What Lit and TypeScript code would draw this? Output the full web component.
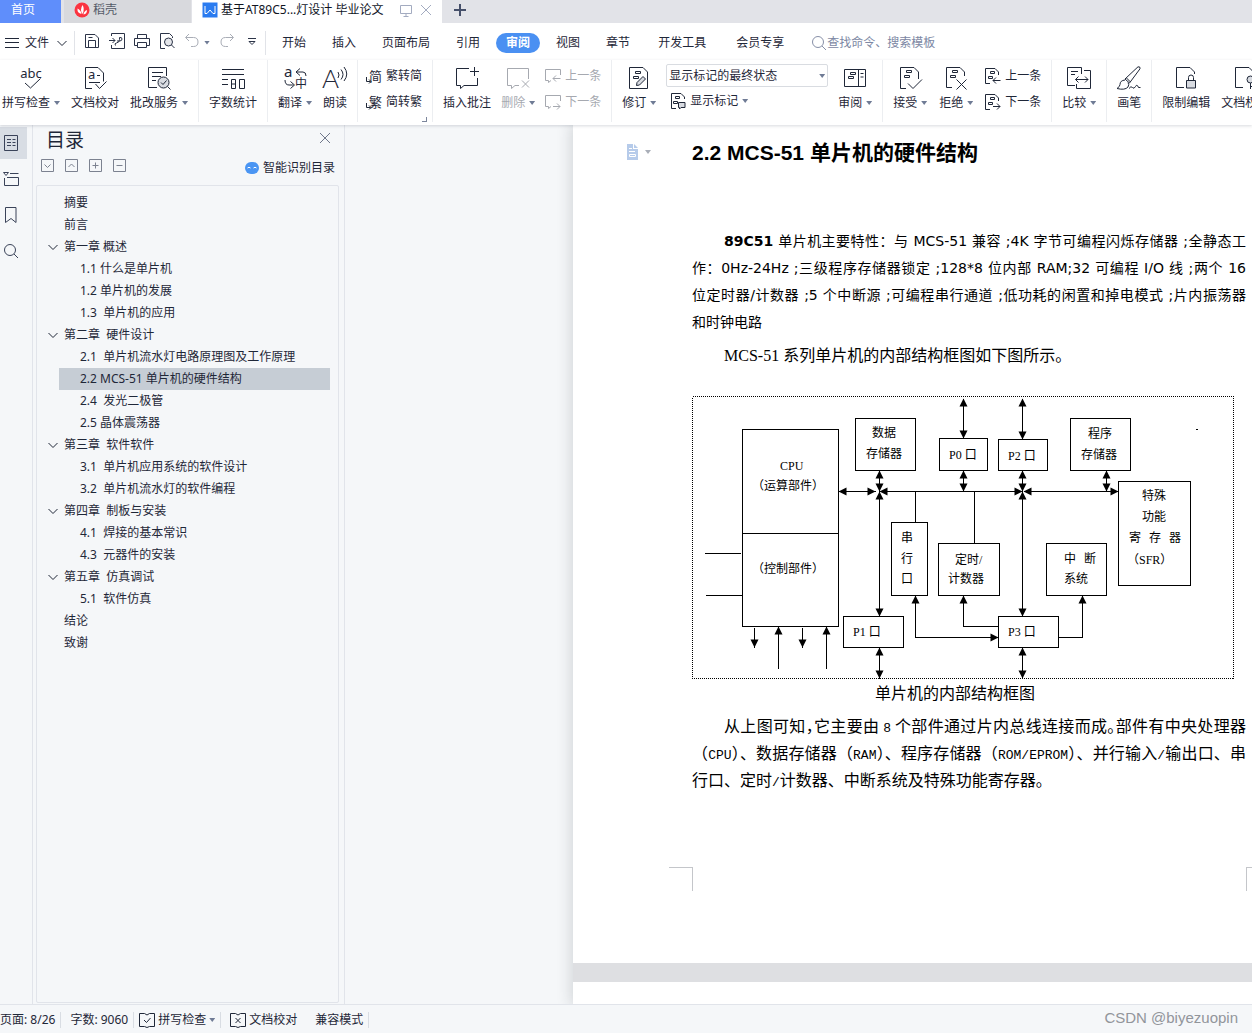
import { LitElement, html, svg, css, nothing } from "lit";
import { customElement, property, state } from "lit/decorators.js";
import { classMap } from "lit/directives/class-map.js";

const ICONS: Record<string, unknown> = {
  spell: svg`<text class="ic" x="12" y="12" text-anchor="middle" font-size="13">abc</text><path d="M6 17l5.500 5 10-9.500"/>`,
  proof: svg`<path d="M9 22.500H2.500V1.500H15l5.500 5.500V15.500M6 16.500h11"/><text class="ic" x="5" y="13" font-size="13">a</text><path d="M14 9.500h3M12.500 18l4 4.500 7-7"/>`,
  service: svg`<path d="M10 21.500H1.500V1.500H19.500V10M5 6.500h11M5 10.500h9M5 14.500h4"/><circle cx="16.500" cy="16.500" r="5.500" fill="#d8dbe1"/><path d="M14 16.500l2 2 3.500-4M20.500 20.500l3 3"/>`,
  count: svg`<path d="M1 3.500h22M1 8.500h22M1 13.500h6M1 18.500h6M10.500 13.500h4v9h-4zM18.500 13.500h5v9h-5zM10.500 18h4"/>`,
  translate: svg`<text class="ic" x="1" y="11" font-size="15">a</text><text class="ic" x="12" y="22" font-size="12">中</text><path d="M17 2.500l-4 3.500 4 3.500M13.500 6H20q3 0 3 4M2 14q0 5 4 5h4.500M7.500 15.500l4 3.500-4 3.500"/>`,
  read: svg`<text class="ic thin" x="-1" y="22" font-size="26">A</text><path d="M15 6q2 3 0 6M18 3.500q4 5 0 10M21 1q5.500 7 0 14"/>`,
  toSimple: svg`<text class="ic" x="3" y="13" font-size="13">简</text><path d="M.5 9v4.500h4M3 11.500l2 2-2 2"/>`,
  toTrad: svg`<text class="ic" x="3" y="13" font-size="13">繁</text><path d="M.5 9v4.500h4M3 11.500l2 2-2 2"/>`,
  addNote: svg`<path d="M14 2.500H1.500V19.500H5.500V22.500L9 19.500H22.500V12M19.500 1v9M15 5.500h9"/>`,
  delNote: svg`<path d="M22.500 13V2.500H1.500V19.500H5.500V22.500L9 19.500H13M16 14.500l7 7M23 14.500l-7 7"/>`,
  prevNote: svg`<path d="M15.500 7V1.500H.5V12.500H3.500V14.500L6 12.500M15.500 10.500H8M11 7.500l-3 3 3 3"/>`,
  nextNote: svg`<path d="M15.500 7V1.500H.5V12.500H3.500V14.500L6 12.500M8 12.500H15M12 9.500l3 3-3 3"/>`,
  revise: svg`<path d="M2.500 1.500H16l4.500 4.500V22.500H2.500zM8.500 5.500h5v2h-5zM6.500 10.500h5v2h-5z"/><path d="M9.500 19.500l.5-3 6-6 2.500 2.500-6 6z" fill="#d8dbe1"/>`,
  marks: svg`<path d="M6 15.500H1.500V.5H11L14.500 4V6M5.500 3.500h4v2h-4zM3.500 8.500h4v2h-4z"/><path d="M8.500 9.500h6.500v5h-4l-1.500 1.500v-1.500h-1z" fill="#d8dbe1"/>`,
  pane: svg`<path d="M1.500 3.500H22.500V20.500H1.500zM15.500 3.500V20.500M7.500 6.500h5v2h-5zM5.500 10.500h5v2h-5zM17.500 7.500h3M17.500 11h3"/>`,
  accept: svg`<path d="M8 22.500H2.500V1.500H16l4.500 4.500V13M8.500 4.500h5v2h-5zM6.500 9.500h5v2h-5zM10 17.500l5 5 9-9"/>`,
  reject: svg`<path d="M8 21.500H2.500V1.500H16l4.500 4.500V10M8.500 4.500h5v2h-5zM6.500 9.500h5v2h-5zM12.500 13.500l10 10M22.500 13.500l-10 10"/>`,
  prevRev: svg`<path d="M5 15.500H.5V.5H10L13.500 4V7M5.500 3.500h4v2h-4zM3.500 8.500h4v2h-4zM15.500 12.500H8M11 9.500l-3 3 3 3"/>`,
  nextRev: svg`<path d="M5 15.500H.5V.5H10L13.500 4V7M5.500 3.500h4v2h-4zM3.500 8.500h4v2h-4zM8 12.500H15M12 9.500l3 3-3 3"/>`,
  compare: svg`<path d="M8 19.500H0.500V1.500H14.500V8M4 5.500h7M4 8.500h4M17 4.500H23.500V22.500H9.500V18M8.500 13.500H21M11.500 10.500l-3 3 3 3M18 10.500l3 3-3 3"/>`,
  brush: svg`<path d="M8 13L21 .8q2.500-.5 2 2L12.500 17zM9.500 12l4 4M8 14q-5 .5-5 4.500 0 2-3 4 8 2 11-1.500 1.500-2.500 0-4.500M12 22.500q2-3 3.500-1t3-1 3 1h2"/>`,
  lock: svg`<path d="M10 21.500H2.500V1.500H16l4.500 4.500V8"/><path d="M12.500 14.500h9v7.500h-9z" fill="#d8dbe1"/><path d="M14.500 14v-2.500q0-2.500 2.500-2.500t2.500 2.500v2.500"/>`,
  rights: svg`<path d="M10 21.500H2.500V1.500H16l4.500 4.500V8"/><circle cx="17.500" cy="13.500" r="3.500" fill="#d8dbe1"/><path d="M17.500 17v6M17.500 20.500h3"/>`,
  burger: svg`<path d="M1 3.500h14M1 7.500h14M1 12.500h14"/>`,
  save: svg`<path d="M1.500 1.500H11L14.500 5V14.500H1.500zM4.500 14V7.500H11.500V14M4.500 4.500h4"/>`,
  pdf: svg`<path d="M2.500 3V.5H15.500V15.500H2.500V12M0 7.500h6M3.500 5l2.500 2.500L3.500 10M6.500 12.500q-1.500-2 1-2.500 3-.5 3-3.500V4.500q2.500-.5 2.500 1.500t-2.500 2H8"/>`,
  print: svg`<path d="M3.500 5V1.500H12.500V5M3.500 12.500H.5V5.500H15.500V12.500H12.500M3.500 9.500H12.500V14.500H3.500z"/>`,
  preview: svg`<path d="M6 15.500H1.500V.5H10.500L13.500 3.500V5"/><circle cx="9.500" cy="9" r="4" fill="#e4e6ea"/><path d="M12.500 12l3 3"/>`,
  undo: svg`<path d="M5 1L1.500 4.500 5 8M2 4.500H9.500q4.500 0 4.500 4.500t-4.500 4.500H7"/>`,
  redo: svg`<path d="M11 1l3.500 3.500L11 8M14 4.500H6.500Q2 4.500 2 9t4.500 4.500H9"/>`,
  more: svg`<path d="M4 5.500h8M5 8.500h6L8 11.500z"/>`,
  search: svg`<circle cx="7" cy="7" r="5.500"/><path d="M11 11l4 4"/>`,
  chevron: svg`<path d="M3.500 6L8 10.500 12.500 6"/>`,
  close: svg`<path d="M3 3l10 10M13 3L3 13"/>`,
  plus: svg`<path d="M8 2v12M2 8h12" stroke-width="2"/>`,
  screen: svg`<path d="M2.500 3.500h11v8h-11zM8 12v2.500M5.500 14.500h5"/>`,
  shell: svg`<circle cx="8" cy="8" r="7.500" fill="#fb3440" stroke="none"/><path d="M8.500 12q-3-4 0-9 2.500 4 0 9zM7.500 12Q3 11 3.500 6.500 7 8 7.500 12zM9.500 12.500q0-3 3.500-4.500 0 4-3.500 4.500z" fill="#fff" stroke="none"/>`,
  writer: svg`<path d="M.5.5h15v15H.5z" fill="#2a7bf0" stroke="none"/><path d="M3 4v7.500h2L8 8l3 3.500h2V4" stroke="#fff"/>`,
  outline: svg`<path d="M1.500 .5h13v15h-13zM4 4.500h4M9.500 4.500h3M4 7.500h4M9.500 7.500h3M4 10.500h4M9.500 10.500h3"/>`,
  chapter: svg`<path d="M.5 1.500h5L3 4.500zM7 2.500h8.500M1.500 7V14.500H15.500V6.500H4"/>`,
  bookmark: svg`<path d="M2.500 .5h10.500V15.500L8 11.500 2.500 15.500z"/>`,
  boxDown: svg`<path d="M1.500 1.500h12v12h-12zM4.500 6.500l3 3 3-3"/>`,
  boxUp: svg`<path d="M1.500 1.500h12v12h-12zM4.500 9l3-3 3 3"/>`,
  boxPlus: svg`<path d="M1.500 1.500h12v12h-12zM4.500 7.500h6M7.500 4.500v6"/>`,
  boxMinus: svg`<path d="M1.500 1.500h12v12h-12zM4.500 7.500h6"/>`,
  robot: svg`<rect x="1" y="2" width="14" height="12" rx="6" fill="#4a95f3" stroke="none"/><path d="M3.500 8q1.500-1.500 3 0M9.500 8q1.500-1.500 3 0" stroke="#fff"/>`,
  book: svg`<path d="M5.500 1.500H.5V14.500H5.500L8 15.500 10.500 14.500H15.500V1.500H10.500M5.500 1.500L8 3 10.500 1.500M5 8l2.500 2.500 4-4.500"/>`,
  bookX: svg`<path d="M5.500 1.500H.5V14.500H5.500L8 15.500 10.500 14.500H15.500V1.500H10.500M5.500 1.500L8 3 10.500 1.500M5.500 6l5 5M10.500 6l-5 5"/>`,
  page: svg`<path d="M2 0h6v5h5v11H2zM9 0l4 4H9z" fill="#b6cbea" stroke="none"/><path d="M4 4.500h3M4 7.500h6M4.500 10.500h6v2h-6z" stroke="#fff"/>`,
};

@customElement("ui-icon")
class UiIcon extends LitElement {
  @property() name = "";
  @property({ type: Number }) size = 16;

  static styles = css`
    :host { display: inline-flex; flex: none; }
    svg { display: block; fill: none; stroke: currentColor; stroke-width: 1; overflow: visible; }
    .ic { fill: currentColor; stroke: none; font-family: "Noto Sans", "Noto Sans CJK SC", sans-serif; }
    .thin { font-family: Lato, "Open Sans", sans-serif; font-weight: 300; }
  `;

  render() {
    return html`<svg width=${this.size} height=${this.size} viewBox="0 0 ${this.size} ${this.size}" aria-hidden="true">
      ${ICONS[this.name] ?? nothing}
    </svg>`;
  }
}

type Point = [number, number];

@customElement("block-diagram")
class BlockDiagram extends LitElement {
  static styles = css`
    :host { display: block; }
    svg { display: block; max-width: 100%; }
    .shape { fill: none; stroke: #000; stroke-width: 1; shape-rendering: crispEdges; }
    .dotted { stroke-dasharray: 1 1; }
    .head { fill: #000; }
    text { font: 12px "Liberation Serif", "Noto Sans CJK SC", serif; fill: #000; white-space: pre; }
  `;

  private boxes = [
    [742, 429, 96, 197], [855, 418, 60, 52], [939, 438, 48, 32], [998, 439, 49, 31],
    [1070, 418, 60, 52], [1118, 481, 72, 104], [891, 522, 36, 73], [938, 543, 61, 52],
    [1046, 543, 60, 52], [843, 616, 60, 31], [998, 616, 60, 31],
  ];

  private lines: { pts: Point[]; start?: boolean; end?: boolean }[] = [
    { pts: [[742, 533], [838, 533]] },
    { pts: [[704, 553], [740, 553]] },
    { pts: [[705, 595], [742, 595]] },
    { pts: [[754, 627], [754, 647]], end: true },
    { pts: [[778, 626], [778, 668]], start: true },
    { pts: [[802, 627], [802, 647]], end: true },
    { pts: [[826, 626], [826, 668]], start: true },
    { pts: [[838, 491], [875, 491]], start: true, end: true },
    { pts: [[879, 491], [1022, 491]], start: true, end: true },
    { pts: [[1023, 491], [1118, 491]], start: true, end: true },
    { pts: [[879, 470], [879, 491]], start: true, end: true },
    { pts: [[879, 491], [879, 616]], start: true, end: true },
    { pts: [[879, 647], [879, 678]], start: true, end: true },
    { pts: [[963, 398], [963, 438]], start: true, end: true },
    { pts: [[963, 470], [963, 491]], start: true, end: true },
    { pts: [[1022, 398], [1022, 439]], start: true, end: true },
    { pts: [[1022, 470], [1022, 491]], start: true, end: true },
    { pts: [[1022, 491], [1022, 616]], start: true, end: true },
    { pts: [[1022, 647], [1022, 678]], start: true, end: true },
    { pts: [[1106, 470], [1106, 491]], start: true, end: true },
    { pts: [[915, 491], [915, 522]] },
    { pts: [[974, 491], [974, 543]] },
    { pts: [[915, 595], [915, 637], [998, 637]], start: true, end: true },
    { pts: [[963, 595], [963, 626], [998, 626]], start: true },
    { pts: [[1082, 595], [1082, 637], [1058, 637]], start: true },
    { pts: [[1195, 429], [1197, 429]] },
  ];

  private labels: [number, number, string][] = [
    [780, 470, "CPU"], [752, 490, "（运算部件）"], [752, 573, "（控制部件）"],
    [872, 437, "数据"], [866, 458, "存储器"], [949, 459, "P0 口"], [1008, 460, "P2 口"],
    [1088, 438, "程序"], [1081, 459, "存储器"], [1142, 500, "特殊"], [1142, 521, "功能"],
    [1129, 542, "寄"], [1149, 542, "存"], [1169, 542, "器"], [1127, 564, "（SFR）"],
    [901, 542, "串"], [901, 563, "行"], [901, 583, "口"], [955, 564, "定时/"], [948, 583, "计数器"],
    [1064, 563, "中"], [1084, 563, "断"], [1064, 583, "系统"], [853, 636, "P1 口"], [1008, 636, "P3 口"],
  ];

  private head([x, y]: Point, [fx, fy]: Point) {
    const dx = Math.sign(x - fx);
    const dy = Math.sign(y - fy);
    const bx = x - dx * 8;
    const by = y - dy * 8;
    const c = 0.5;
    return svg`<polygon class="head" points="${x + c},${y + c} ${bx + dy * 4 + c},${by + dx * 4 + c} ${bx - dy * 4 + c},${by - dx * 4 + c}"/>`;
  }

  render() {
    return html`<svg width="543" height="283" viewBox="692 396 543 283" role="img" aria-label="单片机的内部结构框图">
      <rect class="shape dotted" x="692.5" y="396.5" width="541" height="282" />
      ${this.lines.map(({ pts, start, end }) => svg`
        <polyline class="shape" points=${pts.map(([x, y]) => `${x + 0.5},${y + 0.5}`).join(" ")}/>
        ${start ? this.head(pts[0], pts[1]) : nothing}
        ${end ? this.head(pts[pts.length - 1], pts[pts.length - 2]) : nothing}`)}
      ${this.boxes.map(([x, y, w, h]) => svg`<rect class="shape" x=${x + 0.5} y=${y + 0.5} width=${w} height=${h}/>`)}
      ${this.labels.map(([x, y, t]) => svg`<text x=${x} y=${y}>${t}</text>`)}
    </svg>`;
  }
}

interface Entry { text: string; level: number; chapter?: boolean }

const ENTRIES: Entry[] = [
  { text: "摘要", level: 1 },
  { text: "前言", level: 1 },
  { text: "第一章 概述", level: 1, chapter: true },
  { text: "1.1 什么是单片机", level: 2 },
  { text: "1.2 单片机的发展", level: 2 },
  { text: "1.3  单片机的应用", level: 2 },
  { text: "第二章  硬件设计", level: 1, chapter: true },
  { text: "2.1  单片机流水灯电路原理图及工作原理", level: 2 },
  { text: "2.2 MCS-51 单片机的硬件结构", level: 2 },
  { text: "2.4  发光二极管", level: 2 },
  { text: "2.5 晶体震荡器", level: 2 },
  { text: "第三章  软件软件", level: 1, chapter: true },
  { text: "3.1  单片机应用系统的软件设计", level: 2 },
  { text: "3.2  单片机流水灯的软件编程", level: 2 },
  { text: "第四章  制板与安装", level: 1, chapter: true },
  { text: "4.1  焊接的基本常识", level: 2 },
  { text: "4.3  元器件的安装", level: 2 },
  { text: "第五章  仿真调试", level: 1, chapter: true },
  { text: "5.1  软件仿真", level: 2 },
  { text: "结论", level: 1 },
  { text: "致谢", level: 1 },
];

@customElement("app-root")
class AppRoot extends LitElement {
  @state() private current = 8;
  @state() private tab = "审阅";

  static styles = css`
    :host {
      display: flex; flex-direction: column; height: 100vh; overflow: hidden;
      font: 12px/16px "Noto Sans", "Noto Sans CJK SC", sans-serif;
      color: #1f2738; background: #f5f7f9;
    }
    * { box-sizing: border-box; }
    button { font: inherit; color: inherit; background: none; border: 0; padding: 0; margin: 0; white-space: nowrap; }
    a { color: inherit; text-decoration: none; }
    ul { list-style: none; margin: 0; padding: 0; }
    .caret { flex: none; width: 6px; height: 4px; background: #6f7b95; clip-path: polygon(0 0, 100% 0, 50% 100%); }

    .tabs { display: flex; flex: none; height: 23px; background: #e2e3e8; }
    .tabs button { display: flex; align-items: center; padding: 0 10px 4px; }
    .tabs .home { width: 61px; padding-left: 11px; background: #5f8efb; color: #fff; margin-right: 3px; }
    .tabs .shell { width: 127px; background: #d8d9dd; gap: 3px; color: #555b68; margin-right: 1px; }
    .tabs .file { display: flex; align-items: center; flex: none; width: 250px; background: #fff; padding: 0 8px 4px 10px; color: #10151f; }
    .tabs .file button { padding: 0; color: #a3abc0; }
    .file .name { flex: 1; margin-left: 3px; white-space: nowrap; }
    .file .buttons { display: flex; gap: 4px; }
    .tabs .new { color: #46506a; }

    .menu { display: flex; align-items: center; flex: none; height: 37px; padding-top: 2px; background: #fff; }
    .menu .filemenu { display: flex; align-items: center; gap: 5px; padding-left: 4px; }
    .quick { display: flex; align-items: center; gap: 9px; padding: 0 5px 0 9px; margin-left: 4px; color: #2b3347; border: 1px solid #e1e3e8; border-width: 0 1px; height: 24px; }
    .quick .dim { display: flex; align-items: center; gap: 4px; color: #a9adb6; }
    .menutabs { display: flex; align-items: center; padding-left: 3px; }
    .menutabs button { padding: 0 13px; height: 20px; }
    .menutabs .wide { padding: 0 15px; }
    .menutabs .on { padding: 0 10px; margin: 0 3px; border-radius: 10px; background: #4a90f2; color: #fff; font-weight: bold; }
    .find { display: flex; align-items: center; flex: 1; margin-left: 12px; color: #8790a8; }
    .find input { flex: 1; min-width: 0; border: 0; outline: 0; padding: 0; font: inherit; color: inherit; background: none; }
    .find input::placeholder { color: #7c87a3; opacity: 1; }

    .ribbon { display: flex; flex: none; height: 65px; background: #fff; position: relative; z-index: 1; box-shadow: 0 1px 3px rgba(40, 50, 70, 0.18); overflow-x: clip; }
    .group { display: flex; flex: none; gap: 11px; padding: 0 10px; height: 62px; border-right: 1px solid #eceef1; }
    .group.first { padding-left: 2px; }
    .group.tight { gap: 10px; }
    .group.roomy { gap: 12px; }
    .group.pairs { padding-left: 8px; position: relative; }
    .group.last { border-right: 0; }
    .corner { position: absolute; right: 5px; bottom: 0; width: 5px; height: 5px; border: 1px solid #7c869c; border-width: 0 1px 1px 0; }
    .tool { display: flex; flex-direction: column; align-items: center; gap: 5px; padding-top: 6px; flex: none; }
    .tool .label { display: flex; align-items: center; gap: 4px; }
    .off { color: #a6a9b0; }
    .pair { display: flex; flex-direction: column; gap: 10px; padding-top: 8px; }
    .pair button { display: flex; align-items: center; gap: 4px; }
    .stack { display: flex; flex-direction: column; gap: 6px; padding-top: 4px; width: 162px; }
    .stack button { display: flex; align-items: center; gap: 4px; padding-left: 4px; }
    .pick { display: flex; position: relative; }
    .pick select { appearance: none; width: 100%; height: 23px; border: 1px solid #d9dce1; border-radius: 2px; background: #fff; font: inherit; color: inherit; padding: 0 2px; outline: 0; }
    .pick .caret { position: absolute; right: 3px; top: 10px; }

    .main { display: flex; flex: 1; min-height: 0; }
    .rail { display: flex; flex-direction: column; flex: none; width: 33px; gap: 4px; padding-top: 2px; border-right: 1px solid #e1e4ea; color: #3a4359; }
    .rail button { display: flex; align-items: center; width: 27px; height: 32px; padding-left: 3px; }
    .rail .on { background: #d8dde4; }
    .side { display: flex; flex-direction: column; flex: none; width: 312px; padding: 0 5px 0 3px; border-right: 1px solid #e1e4ea; }
    .side header { display: flex; justify-content: space-between; align-items: center; height: 30px; padding: 0 6px 0 10px; }
    .side h2 { margin: 0; font-size: 19px; line-height: 28px; font-weight: normal; }
    .side header button { color: #6f778a; }
    .treebar { display: flex; align-items: center; gap: 8px; height: 26px; padding: 0 4px; margin-bottom: 4px; color: #7c8290; }
    .treebar .smart { display: flex; align-items: center; gap: 3px; margin-left: auto; color: #1f2738; }
    .tree { flex: 1; border: 1px solid #e1e4ea; border-radius: 2px; padding: 6px 8px 0 10px; margin-bottom: 1px; }
    .tree li { display: grid; grid-template-columns: 12px 1fr; height: 22px; align-items: stretch; }
    .tree .twist { display: flex; align-items: center; justify-content: center; grid-column: 1; width: 12px; }
    .tree a { grid-column: 2; line-height: 22px; padding-left: 5px; white-space: pre; }
    .tree .level2 { padding-left: 21px; }
    .tree .here { background: #c6cdd5; }

    .canvas { flex: 1; min-width: 0; padding-left: 228px; overflow: hidden; }
    .pages { display: flex; flex-direction: column; gap: 19px; min-height: 100%; background: #dedfe2; box-shadow: 0 0 14px 2px rgba(30, 35, 45, 0.16); }
    .page { display: grid; grid-template-columns: 119px 1fr; background: #fff; color: #000; padding: 13px 6px 72px 0; }
    .page.next { flex: 1; padding: 0; }
    .gutter { display: flex; align-items: center; gap: 4px; height: 28px; padding-left: 52px; }
    .gutter .caret { background: #a9aeb8; }
    .text { min-width: 0; }
    h1 { margin: 0 0 60px; font: bold 21px/30px "Liberation Sans", "Noto Sans CJK SC", sans-serif; white-space: nowrap; }
    p { margin: 0; }
    .line { display: block; white-space: nowrap; text-align: justify; text-align-last: justify; }
    .line.end { text-align-last: left; }
    .indent { padding-left: 32px; }
    .features { font: 14px/27px "DejaVu Sans", "Noto Sans CJK SC", sans-serif; }
    .intro { margin: 6px 0 27px; font: 16px/27px "Liberation Serif", "Noto Sans CJK SC", serif; }
    .caption { padding-right: 28px; text-align: center; font: 16px/26px "Noto Sans CJK SC", sans-serif; }
    .summary { margin: 7px 0 74px; font: 16px/27px "Noto Sans CJK SC", sans-serif; }
    .half { font-feature-settings: "halt"; }
    .code { font-family: "Liberation Mono", monospace; font-size: 13px; line-height: 1; }
    .marks { display: flex; justify-content: space-between; margin: 0 -24px 0 -23px; }
    .marks span { width: 24px; height: 24px; border: 1px solid #c4c6ca; border-width: 1px 1px 0 0; }
    .marks span + span { border-width: 1px 0 0 1px; }

    .status { display: flex; align-items: center; flex: none; height: 29px; padding-top: 2px; border-top: 1px solid #e1e4ea; background: #f5f7f9; }
    .status > span, .status > button { display: flex; align-items: center; gap: 3px; height: 16px; white-space: nowrap; }
    .status .cut { padding-right: 5px; margin-right: 9px; border-right: 1px solid #d9dde3; }
    .status .near { margin-right: 5px; }
    .status .wide { margin-right: 18px; }
    .status .mark { margin-left: auto; padding-right: 14px; height: 20px; align-items: flex-start; font: 15px/16px "Liberation Sans", sans-serif; color: #92959b; }
  `;

  private caret() {
    return html`<span class="caret"></span>`;
  }

  private tool(icon: string, label: string, caret = false, off = false) {
    return html`<button class=${classMap({ tool: true, off })} ?disabled=${off}>
      <ui-icon name=${icon} size="24"></ui-icon>
      <span class="label">${label}${caret ? this.caret() : nothing}</span>
    </button>`;
  }

  private pair(a: [string, string], b: [string, string], off = false) {
    return html`<div class="pair">${[a, b].map(([icon, label]) => html`
      <button class=${classMap({ off })} ?disabled=${off}><ui-icon name=${icon}></ui-icon>${label}</button>`)}
    </div>`;
  }

  private quick(icon: string, label: string) {
    return html`<button aria-label=${label}><ui-icon name=${icon}></ui-icon></button>`;
  }

  private renderTop() {
    const menus = ["开始", "插入", "页面布局", "引用", "审阅", "视图", "章节", "开发工具", "会员专享"];
    return html`
      <div class="tabs">
        <button class="home">首页</button>
        <button class="shell"><ui-icon name="shell"></ui-icon>稻壳</button>
        <div class="file">
          <ui-icon name="writer"></ui-icon>
          <span class="name">基于AT89C5...灯设计 毕业论文</span>
          <span class="buttons">${this.quick("screen", "窗口")}${this.quick("close", "关闭标签")}</span>
        </div>
        <button class="new" aria-label="新建"><ui-icon name="plus"></ui-icon></button>
      </div>
      <nav class="menu">
        <button class="filemenu"><ui-icon name="burger"></ui-icon>文件<ui-icon name="chevron"></ui-icon></button>
        <div class="quick">
          ${this.quick("save", "保存")}${this.quick("pdf", "输出为PDF")}${this.quick("print", "打印")}${this.quick("preview", "打印预览")}
          <span class="dim">${this.quick("undo", "撤销")}${this.caret()}</span>
          <span class="dim">${this.quick("redo", "恢复")}</span>
          ${this.quick("more", "更多")}
        </div>
        <div class="menutabs">
          ${menus.map((m) => html`<button class=${classMap({ on: m === this.tab, wide: m.length === 4 && m !== "页面布局" })}
            @click=${() => (this.tab = m)}>${m}</button>`)}
        </div>
        <label class="find"><ui-icon name="search"></ui-icon>
          <input type="text" placeholder="查找命令、搜索模板" aria-label="查找命令、搜索模板" />
        </label>
      </nav>
      <div class="ribbon">
        <div class="group first">${this.tool("spell", "拼写检查", true)}${this.tool("proof", "文档校对")}${this.tool("service", "批改服务", true)}</div>
        <div class="group">${this.tool("count", "字数统计")}</div>
        <div class="group">${this.tool("translate", "翻译", true)}${this.tool("read", "朗读")}</div>
        <div class="group pairs">${this.pair(["toSimple", "繁转简"], ["toTrad", "简转繁"])}<span class="corner"></span></div>
        <div class="group tight">${this.tool("addNote", "插入批注")}${this.tool("delNote", "删除", true, true)}${this.pair(["prevNote", "上一条"], ["nextNote", "下一条"], true)}</div>
        <div class="group tight">
          ${this.tool("revise", "修订", true)}
          <div class="stack">
            <div class="pick"><select aria-label="显示状态"><option>显示标记的最终状态</option><option>最终状态</option></select>${this.caret()}</div>
            <button><ui-icon name="marks"></ui-icon>显示标记${this.caret()}</button>
          </div>
          ${this.tool("pane", "审阅", true)}
        </div>
        <div class="group roomy">${this.tool("accept", "接受", true)}${this.tool("reject", "拒绝", true)}${this.pair(["prevRev", "上一条"], ["nextRev", "下一条"])}</div>
        <div class="group">${this.tool("compare", "比较", true)}</div>
        <div class="group">${this.tool("brush", "画笔")}</div>
        <div class="group last">${this.tool("lock", "限制编辑")}${this.tool("rights", "文档权限")}</div>
      </div>`;
  }

  private renderSide() {
    return html`
      <nav class="rail">
        <button class="on" aria-label="目录"><ui-icon name="outline"></ui-icon></button>
        <button aria-label="章节导航"><ui-icon name="chapter"></ui-icon></button>
        <button aria-label="书签"><ui-icon name="bookmark"></ui-icon></button>
        <button aria-label="查找"><ui-icon name="search"></ui-icon></button>
      </nav>
      <aside class="side">
        <header><h2>目录</h2>${this.quick("close", "关闭")}</header>
        <div class="treebar">
          ${this.quick("boxDown", "展开")}${this.quick("boxUp", "收起")}${this.quick("boxPlus", "增加级别")}${this.quick("boxMinus", "减少级别")}
          <button class="smart"><ui-icon name="robot"></ui-icon>智能识别目录</button>
        </div>
        <ul class="tree">
          ${ENTRIES.map((e, i) => html`<li>
            ${e.chapter ? html`<button class="twist" aria-label="折叠"><ui-icon name="chevron"></ui-icon></button>` : nothing}
            <a href="#s${i}" class=${classMap({ level2: e.level === 2, here: i === this.current })}
              @click=${() => (this.current = i)}>${e.text}</a>
          </li>`)}
        </ul>
      </aside>`;
  }

  private renderPages() {
    return html`<main class="canvas"><div class="pages">
      <article class="page">
        <div class="gutter"><ui-icon name="page"></ui-icon>${this.caret()}</div>
        <div class="text">
          <h1>2.2 MCS-51 单片机的硬件结构</h1>
          <p class="features">
            <span class="line indent"><b>89C51</b> 单片机主要特性：与 MCS-51 兼容 ;4K 字节可编程闪烁存储器 ;全静态工</span>
            <span class="line">作：0Hz-24Hz ;三级程序存储器锁定 ;128*8 位内部 RAM;32 可编程 I/O 线 ;两个 16</span>
            <span class="line">位定时器/计数器 ;5 个中断源 ;可编程串行通道 ;低功耗的闲置和掉电模式 ;片内振荡器</span>
            <span class="line end">和时钟电路</span>
          </p>
          <p class="intro indent">MCS-51 系列单片机的内部结构框图如下图所示。</p>
          <block-diagram></block-diagram>
          <p class="caption">单片机的内部结构框图</p>
          <p class="summary">
            <span class="line indent">从上图可知<span class="half">，</span>它主要由 <span class="code">8</span> 个部件通过片内总线连接而成<span class="half">。</span>部件有中央处理器</span>
            <span class="line">（<span class="code">CPU</span>）、数据存储器（<span class="code">RAM</span>）、程序存储器（<span class="code">ROM/EPROM</span>）、并行输入<span class="code">/</span>输出口、串</span>
            <span class="line end">行口、定时<span class="code">/</span>计数器、中断系统及特殊功能寄存器。</span>
          </p>
          <div class="marks"><span></span><span></span></div>
        </div>
      </article>
      <article class="page next"></article>
    </div></main>`;
  }

  render() {
    return html`
      ${this.renderTop()}
      <div class="main">${this.renderSide()}${this.renderPages()}</div>
      <footer class="status">
        <span class="cut">页面: 8/26</span>
        <span class="cut near">字数: 9060</span>
        <button class="cut"><ui-icon name="book"></ui-icon>拼写检查${this.caret()}</button>
        <button class="wide"><ui-icon name="bookX"></ui-icon>文档校对</button>
        <button class="cut">兼容模式</button>
        <span class="mark">CSDN @biyezuopin</span>
      </footer>`;
  }
}
